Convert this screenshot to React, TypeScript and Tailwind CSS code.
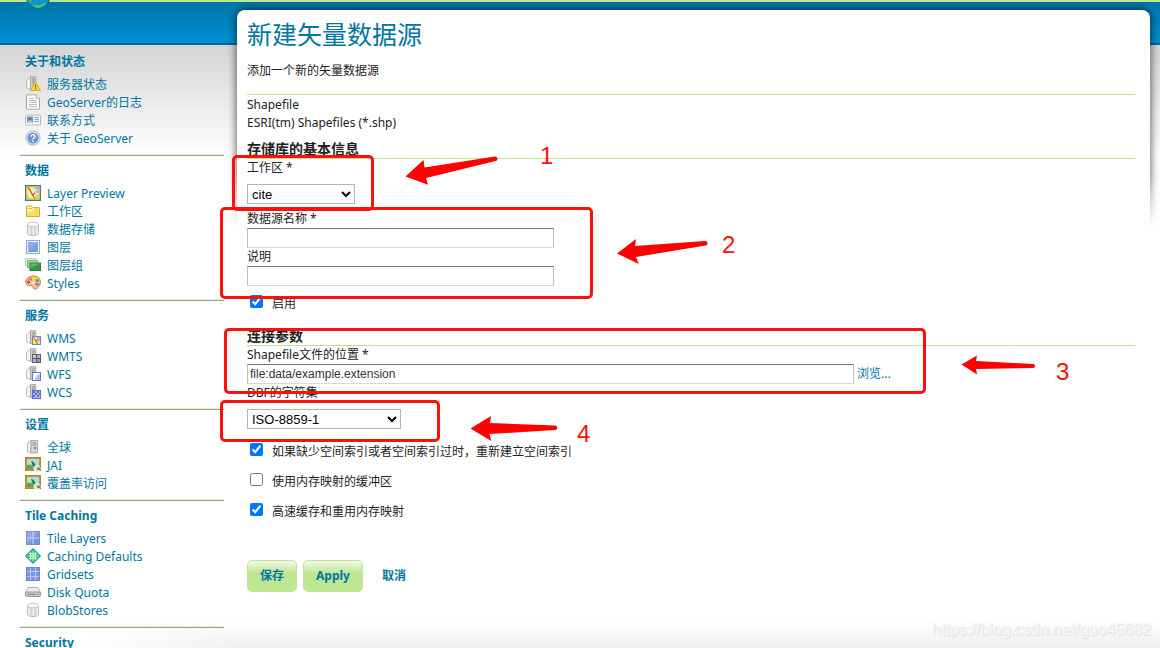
import type { ReactNode } from "react";

function Icon({ children }: { children: ReactNode }) {
  return (
    <svg className="size-4 shrink-0" viewBox="0 0 16 16" aria-hidden="true">
      {children}
    </svg>
  );
}

function ServerBody() {
  return (
    <>
      <path d="M1.5 4.5 5.5 1v12.5L1.5 12z" fill="#f4f4f4" stroke="#b5b5b5" strokeWidth=".9" />
      <path d="M5.5.6h5.3v13H5.5z" fill="#cfcfcf" stroke="#a5a5a5" strokeWidth=".9" />
      <path d="M7 3h3M7 5h3M7 7h3" stroke="#858585" strokeWidth=".9" />
    </>
  );
}

function ServerStatusIcon() {
  return (
    <Icon>
      <ServerBody />
      <path d="M10.5 5.6 15.500 14.500h-10z" fill="#fbd839" stroke="#e0ab2c" strokeLinejoin="round" />
      <path d="M10.500 8.500v3M10.500 12.300v1.100" stroke="#8a6205" strokeWidth="1.100" />
    </Icon>
  );
}

function PageIcon() {
  return (
    <Icon>
      <path d="M1.5.8h9.7l3.3 3.3v11.1h-13z" fill="#fcfcfc" stroke="#a9a9a9" />
      <path d="M11 .8v3.5h3.5" fill="#e4e4e4" stroke="#b9b9b9" />
      <path d="M4 4.5h5M4 6.5h8M4 8.5h8M4 10.5h8M4 12.5h8" stroke="#bdbdbd" />
    </Icon>
  );
}

function ContactIcon() {
  return (
    <Icon>
      <rect x=".5" y="3" width="15" height="10" rx="1" fill="#f6f7f8" stroke="#b4bac0" />
      <rect x="2" y="4.5" width="6" height="6" fill="#5b9ce8" />
      <circle cx="5" cy="6.7" r="1.3" fill="#a3623a" />
      <path d="M3 10.5c0-3 4-3 4 0z" fill="#f3c59b" />
      <path d="M9.5 5.5h4.5M9.5 7.5h4.5M9.5 9.5h4.5" stroke="#87a6c6" />
    </Icon>
  );
}

function HelpIcon() {
  return (
    <Icon>
      <circle cx="8" cy="8" r="7" fill="#e5edf8" stroke="#9eb3d2" />
      <circle cx="8" cy="8" r="5.5" fill="#6a92cf" />
      <path d="M6 6.6c0-2.6 4-2.6 4-.2C10 8 8 7.800 8 9.500M8 10.600v1.400" fill="none" stroke="#fff" strokeWidth="1.5" />
    </Icon>
  );
}

function PreviewIcon() {
  return (
    <Icon>
      <rect x=".7" y=".7" width="14.6" height="14.6" fill="#f5ee93" stroke="#5d6a58" strokeWidth="1.3" />
      <path d="M8 2h6v6h-4z" fill="#8fb6ea" />
      <path d="M2 9l4 5H2zM10 9h4v5h-3zM2 2h2v3H2z" fill="#b9dc7d" />
      <path d="M3 12l3-3M13 8l-5 4M10 2v6M8 5h6" fill="none" stroke="#fffdf0" strokeWidth=".8" />
      <path d="M3.500 2l4 8 2.500 4M7.500 10 10 8" fill="none" stroke="#e04a24" strokeWidth="1.2" />
    </Icon>
  );
}

function FolderIcon() {
  return (
    <Icon>
      <path d="M1.500 3h5l1.500 1.500h6.500V13.500h-13z" fill="#fff3b3" stroke="#d8ae27" />
      <path d="M2 13V8.500h4.500L8 7h6v6z" fill="#fbdc5c" />
      <path d="M3 5.500h4M9 6h4" stroke="#e2b93a" />
    </Icon>
  );
}

function DatabaseIcon() {
  return (
    <Icon>
      <path d="M2.500 3.500v9c0 2.700 11 2.700 11 0v-9z" fill="#f0f0f0" stroke="#bcbcbc" />
      <path d="M5 6h2.500v8H5zM9 6h2.500v8H9z" fill="#d6d6d6" />
      <ellipse cx="8" cy="3.500" rx="5.500" ry="2.300" fill="#fafafa" stroke="#c4c4c4" />
    </Icon>
  );
}

function LayerIcon() {
  return (
    <Icon>
      <rect x="1.500" y="1.500" width="13" height="13" fill="#f3f6fd" stroke="#8ea6d8" />
      <rect x="3" y="3" width="10" height="10" fill="#8faae3" />
      <path d="M3 13 13 3v10z" fill="#7e9bdb" />
    </Icon>
  );
}

function LayerGroupIcon() {
  return (
    <Icon>
      <rect x=".5" y="1.500" width="10" height="7" fill="#e2f1e0" stroke="#b5d6b2" />
      <rect x="2.500" y="3.500" width="10" height="7" fill="#a9d5a5" stroke="#7cb679" />
      <rect x="5" y="6" width="10.500" height="7.500" fill="#359648" stroke="#2a7a3b" />
      <path d="M5.500 6.500h9.500L5.500 11z" fill="#62b96e" />
    </Icon>
  );
}

function PaletteIcon() {
  return (
    <Icon>
      <path d="M9 1C4 1 .7 4 .7 7.300.7 10.500 4 11 6 10.500c2-.3 1.800 1.500 2.300 2.700C9.300 15.500 15.300 13 15.300 7 15.300 3.500 13 1 9 1z" fill="#f5c08c" stroke="#bd7840" />
      <circle cx="3.500" cy="7" r="1.500" fill="#e33b2a" />
      <circle cx="5.500" cy="4.200" r="1.300" fill="#e8603a" />
      <circle cx="9" cy="3.300" r="1.500" fill="#f7dc29" />
      <circle cx="12.300" cy="5.500" r="1.500" fill="#46a53d" />
      <circle cx="12" cy="9.200" r="1.500" fill="#4a87d8" />
      <circle cx="8" cy="8" r="1.300" fill="#fff1df" />
    </Icon>
  );
}

function WmsIcon() {
  return (
    <Icon>
      <ServerBody />
      <rect x="7.500" y="6.500" width="8" height="8" fill="#f7e27a" stroke="#7a82c4" />
      <path d="M12 7h3v4h-2z" fill="#9cb9ec" />
      <path d="M8.500 7.500 11 11l1.500 3M11 11l2-1.500" fill="none" stroke="#e25a35" strokeWidth="1.100" />
    </Icon>
  );
}

function WmtsIcon() {
  return (
    <Icon>
      <ServerBody />
      <rect x="7.500" y="6.500" width="8" height="8" fill="#f4d562" stroke="#565c94" />
      <path d="M12 7h3v3h-3zM8 11h3v3H8z" fill="#9cb9ec" />
      <path d="M12 11h3v3h-3z" fill="#e5835a" />
      <path d="M11.500 6.500v8M7.500 10.500h8" stroke="#4c5186" />
    </Icon>
  );
}

function WfsIcon() {
  return (
    <Icon>
      <ServerBody />
      <rect x="7.500" y="6.500" width="8" height="8" fill="#fff" stroke="#6a79c4" />
      <path d="M9 14c1.500-.5 2-5 6-6.500V14z" fill="#a9c6f2" />
    </Icon>
  );
}

function WcsIcon() {
  return (
    <Icon>
      <ServerBody />
      <rect x="7.500" y="6.500" width="8" height="8" fill="#a9bcf0" stroke="#5f6cba" />
      <path d="M8 7h2v2H8zM12 7h2v2h-2zM10 9h2v2h-2zM14 9h1v2h-1zM8 11h2v2H8zM12 11h2v2h-2z" fill="#5a70c6" />
    </Icon>
  );
}

function ServerIcon() {
  return (
    <Icon>
      <path d="M2.500 4 6 1.500V14l-3.500-1.500z" fill="#f4f4f4" stroke="#b5b5b5" />
      <path d="M6 1.500h6.500V14H6z" fill="#d4d4d4" stroke="#ababab" />
      <path d="M7.500 4h3.500M7.500 6h3.500" stroke="#8a8a8a" />
      <rect x="9" y="8" width="2" height="2" fill="#47a44c" />
    </Icon>
  );
}

function ImageIcon() {
  return (
    <Icon>
      <rect x=".9" y=".9" width="14.200" height="12.200" fill="#a5dcf3" stroke="#bd8526" strokeWidth="1.800" />
      <path d="M2 12V8c3-1 4 1 8 0v4z" fill="#4fae4a" />
      <path d="M6 4c2 0 4 2 5 5H8C7 7 7 6 6 4z" fill="#257f45" />
      <circle cx="4.500" cy="4.500" r="1.400" fill="#fbe44e" />
      <circle cx="12" cy="11.500" r="3.200" fill="#dedede" stroke="#f6f6f6" strokeDasharray="1.500 1" />
      <rect x="12" y="10.500" width="3.500" height="2.500" rx="1" fill="#a8713f" />
    </Icon>
  );
}

function TilesIcon() {
  return (
    <Icon>
      <rect x="1" y="1" width="14" height="14" fill="#7795de" />
      <path d="M1 1h14L1 15z" fill="#8fa9e8" />
      <path d="M8 1v14M1 8h14" stroke="#c9d6f6" />
      <rect x="1.500" y="1.500" width="13" height="13" fill="none" stroke="#6f8ad0" strokeWidth=".8" />
    </Icon>
  );
}

function CachingIcon() {
  return (
    <Icon>
      <path d="M8 .5 15.500 8 8 15.500.5 8z" fill="#27b3ad" stroke="#23808f" />
      <circle cx="8" cy="8" r="5.500" fill="#2fbf9a" />
      <circle cx="8" cy="8" r="3" fill="#8de66c" />
      <path d="M8 2.500v11M2.500 8h11M4 5.500h8M4 10.500h8M5.500 4v8M10.500 4v8" stroke="#c9f7dd" strokeWidth=".8" />
    </Icon>
  );
}

function GridIcon() {
  return (
    <Icon>
      <rect x="1" y="1" width="14" height="14" fill="#7694e2" />
      <path d="M5.500 1v14M10.500 1v14M1 5.500h14M1 10.500h14" stroke="#bccbf6" />
      <rect x="1.500" y="1.500" width="13" height="13" fill="none" stroke="#6483d0" strokeWidth=".8" />
    </Icon>
  );
}

function DiskIcon() {
  return (
    <Icon>
      <path d="M3 3.500h10l2.500 5H.5z" fill="#ededed" stroke="#b3b3b3" />
      <rect x=".5" y="8" width="15" height="4.500" rx="1" fill="#cacaca" stroke="#9a9a9a" />
      <path d="M2.500 10.300h8" stroke="#808080" />
      <path d="M12.500 10.300h1.500" stroke="#808080" />
    </Icon>
  );
}

type Item = { label: string; icon: ReactNode };

const SECTIONS: { title: string; items: Item[] }[] = [
  {
    title: "关于和状态",
    items: [
      { label: "服务器状态", icon: <ServerStatusIcon /> },
      { label: "GeoServer的日志", icon: <PageIcon /> },
      { label: "联系方式", icon: <ContactIcon /> },
      { label: "关于 GeoServer", icon: <HelpIcon /> },
    ],
  },
  {
    title: "数据",
    items: [
      { label: "Layer Preview", icon: <PreviewIcon /> },
      { label: "工作区", icon: <FolderIcon /> },
      { label: "数据存储", icon: <DatabaseIcon /> },
      { label: "图层", icon: <LayerIcon /> },
      { label: "图层组", icon: <LayerGroupIcon /> },
      { label: "Styles", icon: <PaletteIcon /> },
    ],
  },
  {
    title: "服务",
    items: [
      { label: "WMS", icon: <WmsIcon /> },
      { label: "WMTS", icon: <WmtsIcon /> },
      { label: "WFS", icon: <WfsIcon /> },
      { label: "WCS", icon: <WcsIcon /> },
    ],
  },
  {
    title: "设置",
    items: [
      { label: "全球", icon: <ServerIcon /> },
      { label: "JAI", icon: <ImageIcon /> },
      { label: "覆盖率访问", icon: <ImageIcon /> },
    ],
  },
  {
    title: "Tile Caching",
    items: [
      { label: "Tile Layers", icon: <TilesIcon /> },
      { label: "Caching Defaults", icon: <CachingIcon /> },
      { label: "Gridsets", icon: <GridIcon /> },
      { label: "Disk Quota", icon: <DiskIcon /> },
      { label: "BlobStores", icon: <DatabaseIcon /> },
    ],
  },
  { title: "Security", items: [] },
];

function Sidebar() {
  return (
    <nav className="ml-5 w-[204px] shrink-0 pt-[47px] text-[#0076a1]">
      {SECTIONS.map((section) => (
        <section
          key={section.title}
          className="border-b border-[#91a584] pt-1.5 pb-[7px] pl-[5px] shadow-[inset_0_-1px_0_#e3f1d9]"
        >
          <h2 className="mb-[5px] font-bold">{section.title}</h2>
          <ul>
            {section.items.map((item) => (
              <li key={item.label}>
                <a href="#" className="flex h-[18px] items-start gap-1.5">
                  {item.icon}
                  <span>{item.label}</span>
                </a>
              </li>
            ))}
          </ul>
        </section>
      ))}
    </nav>
  );
}

function CheckRow({ id, label, checked }: { id: string; label: string; checked?: boolean }) {
  return (
    <div className="flex items-start gap-[9px] pl-[3px]">
      <input id={id} type="checkbox" defaultChecked={checked} className="size-[13px]" />
      <label htmlFor={id}>{label}</label>
    </div>
  );
}

const INPUT =
  "block h-5 border border-t-[#767676] border-x-[#bdbdbd] border-b-[#d8d8d8] bg-white px-0.5 font-['Liberation_Sans',Arial,sans-serif] text-[12px] text-[#333]";
const SELECT =
  "block h-5 border border-[#b5b5b5] bg-white font-['Liberation_Sans',Arial,sans-serif] text-[13px] text-black";
const HEADING = "border-b border-[#bde58f] text-[14px] leading-[18px] font-bold text-[#222]";
const BUTTON =
  "h-8 rounded-[5px] border border-[#bfe693] bg-linear-to-b from-[#f1f9e6] to-[#bfe693] to-40% px-3 font-bold text-[#0076a1]";

function StoreForm() {
  return (
    <form className="relative pr-[15px] pb-14 pl-2.5">
      <h1 className="pt-1.5 text-[25px] leading-9 text-[#0076a1]">新建矢量数据源</h1>
      <p className="mt-2.5 border-b border-[#bde58f] pb-3.5">添加一个新的矢量数据源</p>
      <div className="pt-px">
        <p>Shapefile</p>
        <p>ESRI(tm) Shapefiles (*.shp)</p>
      </div>

      <h2 className={`mt-2 ${HEADING}`}>存储库的基本信息</h2>
      <label htmlFor="workspace" className="block">工作区 *</label>
      <select id="workspace" className={`mt-[7px] w-[108px] ${SELECT}`}>
        <option>cite</option>
      </select>
      <label htmlFor="name" className="mt-1.5 block">数据源名称 *</label>
      <input id="name" type="text" className={`w-[307px] ${INPUT}`} />
      <label htmlFor="desc" className="block">说明</label>
      <input id="desc" type="text" className={`w-[307px] ${INPUT}`} />
      <div className="mt-[9px]">
        <CheckRow id="enabled" label="启用" checked />
      </div>

      <h2 className={`mt-3.5 ${HEADING}`}>连接参数</h2>
      <label htmlFor="location" className="block">Shapefile文件的位置 *</label>
      <div className="flex items-center gap-[3px]">
        <input id="location" type="text" defaultValue="file:data/example.extension" className={`w-[607px] ${INPUT}`} />
        <a href="#" className="text-[#0076a1]">浏览...</a>
      </div>
      <label htmlFor="charset" className="block">DBF的字符集</label>
      <select id="charset" className={`mt-[7px] w-[154px] ${SELECT}`}>
        <option>ISO-8859-1</option>
      </select>
      <div className="mt-3.5 flex flex-col gap-3">
        <CheckRow id="reindex" label="如果缺少空间索引或者空间索引过时，重新建立空间索引" checked />
        <CheckRow id="mmap" label="使用内存映射的缓冲区" />
        <CheckRow id="cache" label="高速缓存和重用内存映射" checked />
      </div>

      <div className="mt-[39px] flex items-center gap-1.5">
        <button type="button" className={BUTTON}>保存</button>
        <button type="button" className={BUTTON}>Apply</button>
        <a href="#" className="ml-[13px] font-bold text-[#0076a1]">取消</a>
      </div>
    </form>
  );
}

const BOX = "absolute rounded-[5px] border-[3px] border-[#fb1107]";
const DIGIT = "absolute text-[24px] leading-7 text-[#fb1107]";

function Annotations() {
  return (
    <div className="pointer-events-none absolute inset-0 font-['Liberation_Sans',Arial,sans-serif]">
      <div className={`${BOX} top-[155px] left-[232px] h-[56px] w-[142px]`} />
      <div className={`${BOX} top-[207px] left-[220px] h-[92px] w-[373px]`} />
      <div className={`${BOX} top-[328px] left-[224px] h-[66px] w-[702px]`} />
      <div className={`${BOX} top-[400px] left-[220px] h-[42px] w-[220px]`} />
      <svg className="absolute top-0 left-0" width="1160" height="648" fill="#fe0000" aria-hidden="true">
        <path d="M405.500 176.500 423.500 160l1 7.500L495 156.500a2.300 2.300 0 0 1 1.500 4.200L426 178l2 6.800z" />
        <path d="M617 253.500 636 239l-1 7 70-5a2.200 2.200 0 0 1 .500 4.500L636 257l2.800 7z" />
        <path d="M961.500 364.500 977 355.500l-1 5.500 57 3a2 2 0 0 1 0 4l-57 1 1 5.500z" />
        <path d="M470.500 428.500 491 416l-1 7 65 2.500a2.300 2.300 0 0 1 0 4.600L489.500 434l1.800 7z" />
      </svg>
      <span className={`${DIGIT} top-[142px] left-[540px]`}>1</span>
      <span className={`${DIGIT} top-[231px] left-[722px]`}>2</span>
      <span className={`${DIGIT} top-[358px] left-[1056px]`}>3</span>
      <span className={`${DIGIT} top-[420px] left-[577px]`}>4</span>
    </div>
  );
}

export default function App() {
  return (
    <div className="relative isolate h-screen overflow-hidden bg-white font-['Noto_Sans','Noto_Sans_CJK_SC',sans-serif] text-[12px] leading-[18px] text-[#222]">
      <div className="absolute inset-x-0 top-0 -z-10">
        <div className="h-[45px] border-t-2 border-b-2 border-t-[#bfe693] border-b-[#006a9d] bg-linear-to-b from-[#0076a8] to-[#008fd3]" />
        <div className="h-[110px] bg-linear-to-b from-[#d4d4d4] to-white" />
      </div>
      <div className="absolute right-0 bottom-0 left-20 -z-10 h-7 bg-linear-to-b from-transparent to-[#efefef] [mask-image:linear-gradient(to_right,transparent,black_160px)]" />
      <svg className="absolute top-0 left-[25px]" width="26" height="10" viewBox="0 0 26 10" aria-hidden="true">
        <circle cx="13" cy="-4" r="12.500" fill="#0a5f94" />
        <circle cx="13" cy="-4" r="11.500" fill="#1590d0" />
        <path d="M7 5.500c3-2 6 .5 9-1 3-1.500 4-2 6-2-2 4-6 5.500-9 5.500-2.500 0-4.500-1-6-2.500z" fill="#3fc26b" />
        <path d="M2 0h5l-1 3-2 .5z" fill="#3fae7f" />
      </svg>

      <div className="flex">
        <Sidebar />
        <main className="relative mt-2.5 mr-2.5 ml-[13px] min-w-0 flex-1">
          <div className="absolute -inset-x-2.5 -top-2 h-[226px] overflow-hidden px-2.5 pt-2 [mask-image:linear-gradient(to_bottom,black_170px,transparent)]">
            <div className="h-[260px] rounded-t-lg bg-white shadow-[0_0_9px_1px_rgba(0,0,0,0.6)]" />
          </div>
          <StoreForm />
        </main>
      </div>

      <Annotations />
      <span className="absolute right-[9px] bottom-[9px] font-['Liberation_Sans',Arial,sans-serif] text-[16px] text-[#f8f8f8] [text-shadow:1px_1px_1px_#dcdcdc,0_0_1px_#e4e4e4]">
        https://blog.csdn.net/guo45682
      </span>
    </div>
  );
}
